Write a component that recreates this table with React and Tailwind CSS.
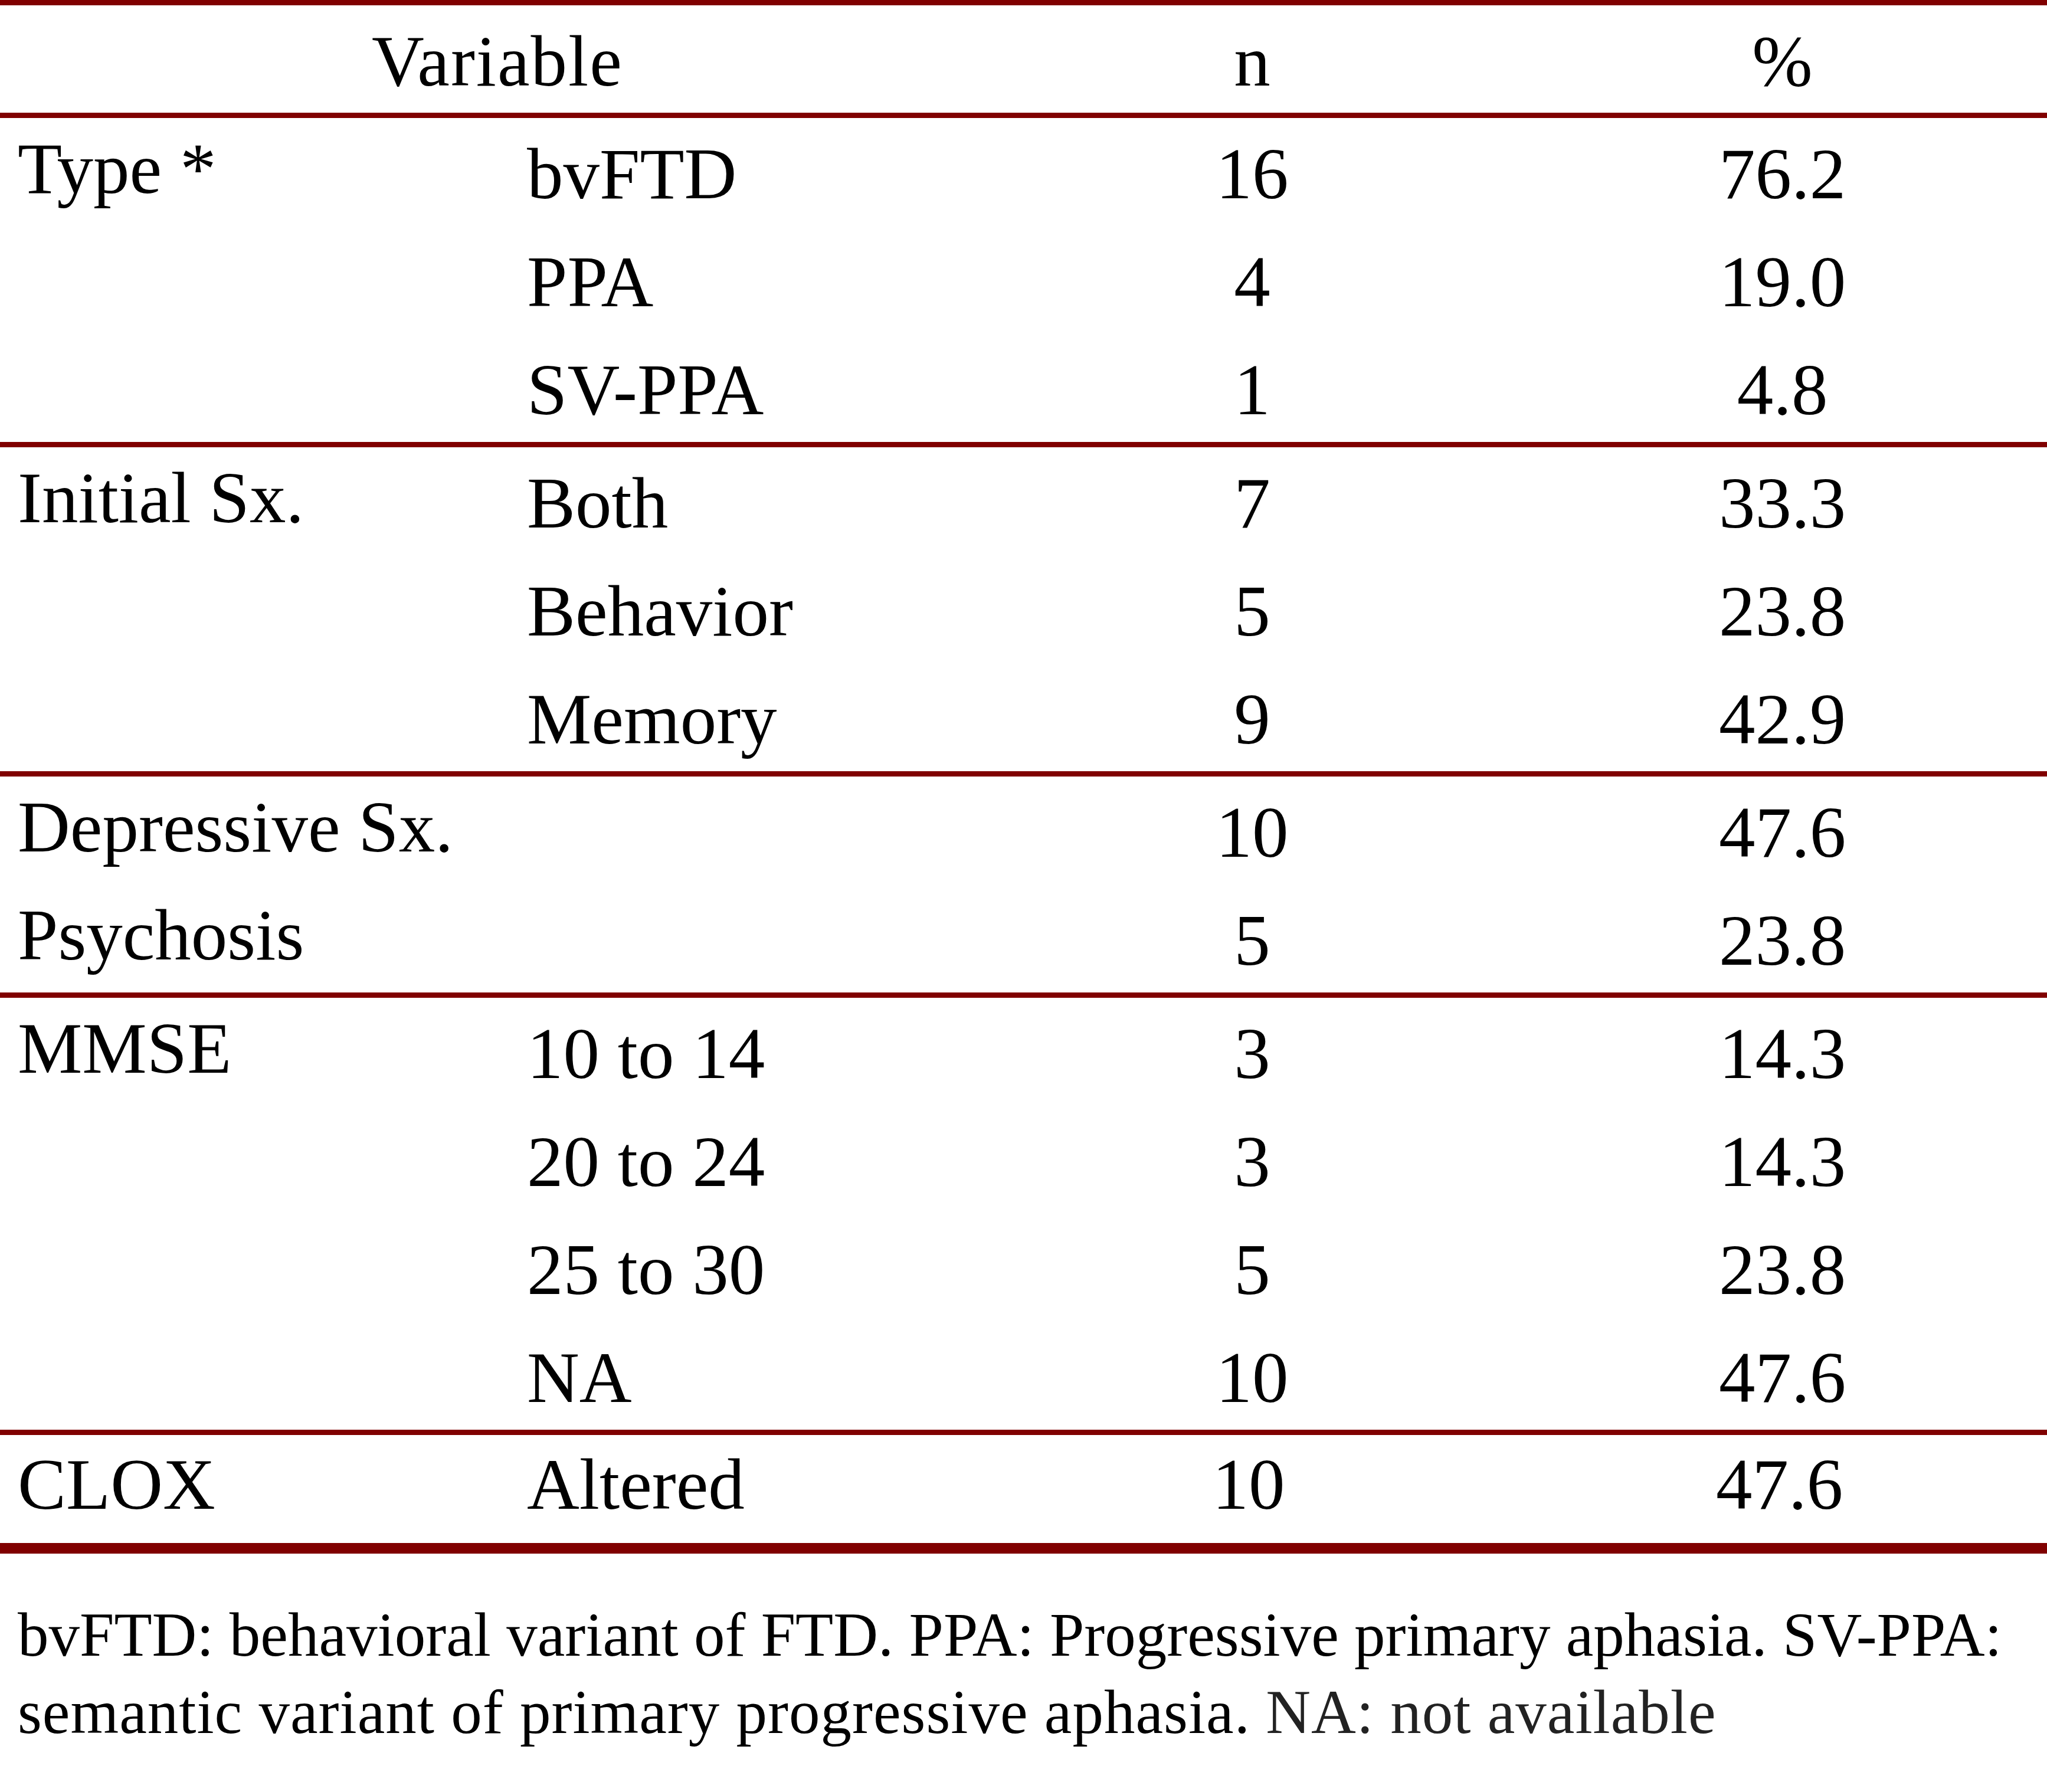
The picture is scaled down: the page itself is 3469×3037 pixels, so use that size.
import React from "react";

const GROUPS = [
  [
    ["Type *", "bvFTD", "16", "76.2"],
    ["", "PPA", "4", "19.0"],
    ["", "SV-PPA", "1", "4.8"],
  ],
  [
    ["Initial Sx.", "Both", "7", "33.3"],
    ["", "Behavior", "5", "23.8"],
    ["", "Memory", "9", "42.9"],
  ],
  [
    ["Depressive Sx.", "", "10", "47.6"],
    ["Psychosis", "", "5", "23.8"],
  ],
  [
    ["MMSE", "10 to 14", "3", "14.3"],
    ["", "20 to 24", "3", "14.3"],
    ["", "25 to 30", "5", "23.8"],
    ["", "NA", "10", "47.6"],
  ],
];

function Row({ cells, last }) {
  const [label, sub, n, pct] = cells;
  return (
    <div className="grid h-[183px] grid-cols-[861px_825px_872px_1fr] leading-none">
      <div className={`whitespace-nowrap pl-[30px] ${last ? "pt-[22px]" : "pt-[24px]"}`}>{label}</div>
      <div className={`whitespace-nowrap pl-[32px] ${last ? "pt-[22px]" : "pt-[33px]"}`}>{sub}</div>
      <div className={`text-center ${last ? "pt-[22px] pr-[12px]" : "pt-[33px]"}`}>{n}</div>
      <div className={`text-center pl-[14px] ${last ? "pt-[22px] pr-[10px]" : "pt-[33px]"}`}>{pct}</div>
    </div>
  );
}

export default function App() {
  return (
    <div className="w-[3469px] bg-white text-black font-['Liberation_Serif',serif]">
      <div className="text-[123px]">
        {/* header */}
        <div className="grid h-[200px] grid-cols-[861px_825px_872px_1fr] border-y-[9px] border-[#800000] leading-none">
          <div className="col-span-2 pt-[33px] text-center tracking-[2px]">Variable</div>
          <div className="pt-[33px] text-center">n</div>
          <div className="pl-[14px] pt-[33px] text-center">%</div>
        </div>

        {GROUPS.map((g, i) => (
          <div key={i} className="border-b-[9px] border-[#800000]">
            {g.map((r, j) => (
              <Row key={j} cells={r} />
            ))}
          </div>
        ))}

        <div className="border-b-[18px] border-[#800000]">
          <Row cells={["CLOX", "Altered", "10", "47.6"]} last />
        </div>
      </div>

      {/* footnote */}
      <p className="mt-[72px] pl-[30px] text-[105px] leading-[131px]">
        bvFTD: behavioral variant of FTD. PPA: Progressive primary aphasia. SV-PPA:
        <br />
        <span className="tracking-[1px]">semantic variant of primary progressive aphasia.</span>{" "}
        <span className="text-[#222] tracking-[1px]">NA: not available</span>
      </p>
    </div>
  );
}
